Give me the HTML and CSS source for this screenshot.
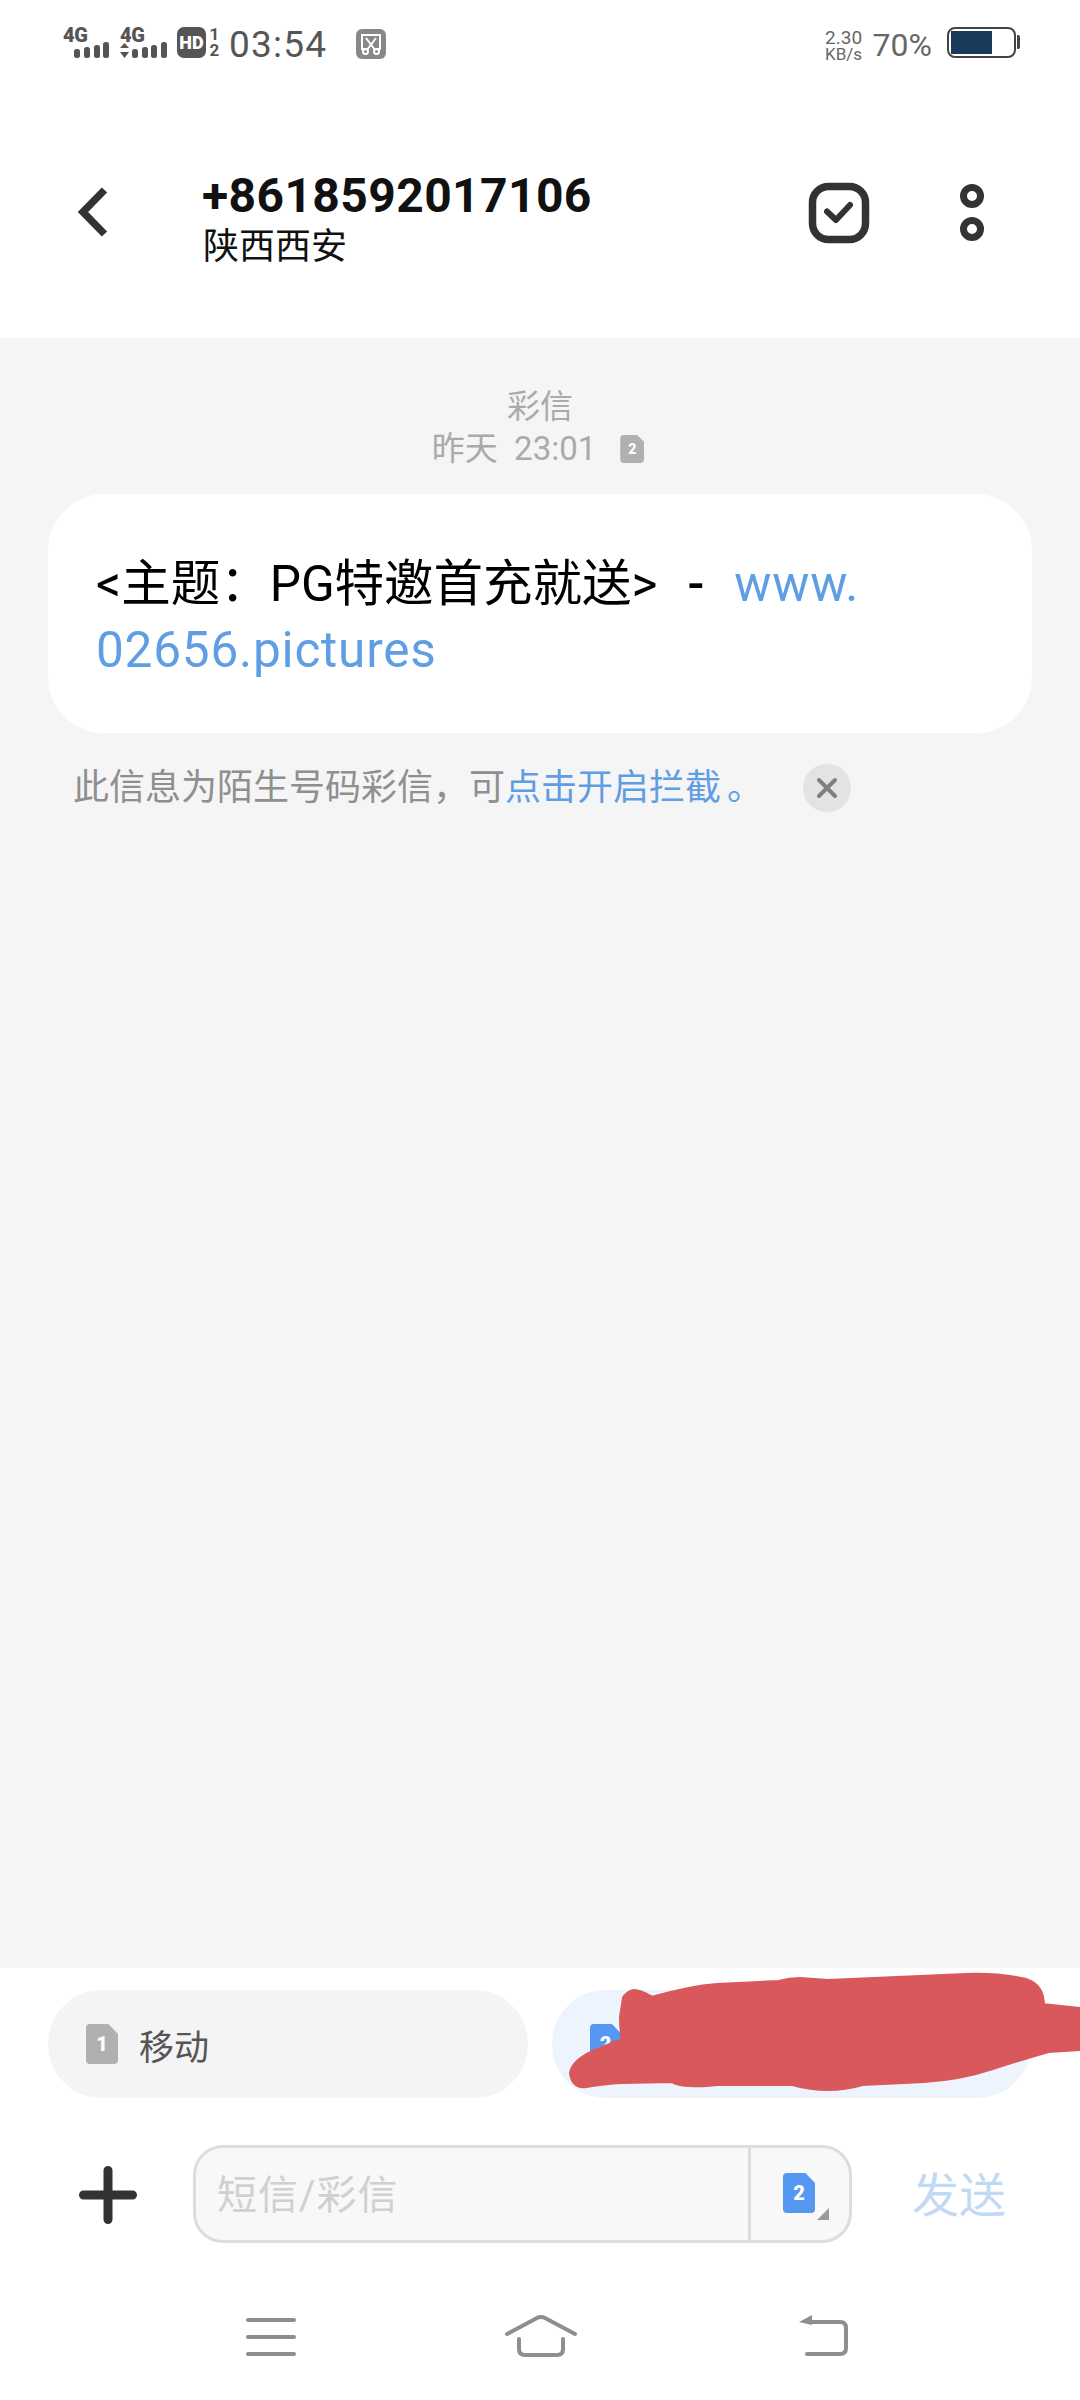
FILE: index.html
```html
<!DOCTYPE html>
<html lang="zh-CN">
<head>
  <meta charset="UTF-8" />
  <meta name="viewport" content="width=device-width, initial-scale=1.0"/>
  <title>+8618592017106</title>
  <link rel="stylesheet" href="styles.css">
</head>
<body>
  <div class="phone">

    <!-- Status bar -->
    <div class="status-bar">
      <div class="status-left">
        <div class="signal">
          <span class="net">4G</span>
          <svg class="bars" width="36" height="17" viewBox="0 0 36 17"><rect x="0" y="7" width="6" height="9" rx="2.5"/><rect x="10" y="5" width="6" height="11" rx="2.5"/><rect x="20" y="3" width="6" height="13" rx="2.5"/><rect x="29" y="0" width="6" height="16" rx="2.5"/></svg>
        </div>
        <div class="signal signal-two">
          <span class="net">4G</span>
          <svg class="bars" width="47" height="17" viewBox="0 0 47 17"><path d="M0 6 4.500 1 9 6zM0 10h9l-4.500 6z"/><rect x="12" y="7" width="6" height="9" rx="2.500"/><rect x="22" y="5" width="6" height="11" rx="2.500"/><rect x="31" y="3" width="6" height="13" rx="2.500"/><rect x="41" y="0" width="6" height="16" rx="2.500"/></svg>
        </div>
        <span class="hd">HD</span>
        <div class="hd-nums"><span>1</span><span>2</span></div>
        <span class="clock">03:54</span>
        <div class="clip-icon">
          <svg width="30" height="30" viewBox="0 0 30 30" fill="none" stroke="#fff" stroke-width="2"><path d="M9 20H6V6h18v14h-3"/><path d="M10 9l9 12M20 9l-9 12"/><circle cx="9.500" cy="22.500" r="2.500"/><circle cx="20.500" cy="22.500" r="2.500"/></svg>
        </div>
      </div>
      <div class="status-right">
        <div class="speed"><span class="speed-num">2.30</span><span class="speed-unit">KB/s</span></div>
        <span class="percent">70%</span>
        <div class="battery"><div class="battery-level"></div></div>
        <div class="battery-nub"></div>
      </div>
    </div>

    <!-- Header -->
    <header class="topbar">
      <svg class="back" width="30" height="50" viewBox="0 0 30 50" fill="none" stroke="#333" stroke-width="7.500"><path d="M26.500 3 5 25l21.500 22"/></svg>
      <div class="contact">
        <div class="number">+8618592017106</div>
        <div class="place">陕西西安</div>
      </div>
      <svg class="check-btn" width="62" height="62" viewBox="0 0 62 62" fill="none" stroke="#333"><rect x="4.500" y="4.500" width="53" height="53" rx="16" stroke-width="7.500"/><path d="M19 29.500l9 8.500 14-15" stroke-width="6" stroke-linecap="round" stroke-linejoin="round"/></svg>
      <svg class="more-btn" width="26" height="60" viewBox="0 0 26 60" fill="none" stroke="#333" stroke-width="7"><circle cx="13" cy="13" r="8.500"/><circle cx="13" cy="46" r="8.500"/></svg>
    </header>

    <!-- Thread -->
    <main class="thread">
      <div class="msg-type">彩信</div>
      <div class="msg-time">
        <span>昨天&nbsp;&nbsp;23:01</span>
        <span class="sim sim-small">2</span>
      </div>
      <div class="bubble">&lt;主题：PG特邀首充就送&gt;<span class="dash">-</span><span class="link">www.<br>02656.pictures</span></div>
      <div class="notice">
        <p>此信息为陌生号码彩信，可<span class="link-plain">点击开启拦截</span><span class="notice-end">。</span></p>
        <svg class="notice-close" width="48" height="48" viewBox="0 0 48 48"><circle cx="24" cy="24" r="24" fill="#e3e3e3"/><path d="M16 16l16 16M32 16 16 32" stroke="#7f7f7f" stroke-width="4" stroke-linecap="round"/></svg>
      </div>
    </main>

    <!-- SIM picker -->
    <div class="sim-row">
      <div class="sim-pill">
        <span class="sim sim-grey">1</span>
        <span class="sim-name">移动</span>
      </div>
      <div class="sim-pill sim-pill-blue">
        <span class="sim sim-blue">2</span>
      </div>
      <svg class="scribble" width="1080" height="130" viewBox="0 1970 1080 130"><path fill="#d9585c" stroke="#d9585c" stroke-width="6" stroke-linejoin="round" d="M572 2073Q574 2062 593 2053L624 2040Q622 2030 622 2017L625 1998Q630 1992 634 1992Q640 1992 652 1999Q690 1988 717 1986L779 1983Q790 1980 800 1980L828 1982L966 1976Q1000 1975 1026 1981Q1042 1986 1042 2006L1080 2010V2048L1048 2050Q1020 2058 993 2067Q960 2078 924 2080L862 2083Q845 2088 828 2088Q810 2088 793 2083L717 2083Q700 2085 690 2084Q680 2084 672 2080L621 2081Q605 2082 586 2085Q574 2087 572 2073z"/></svg>
    </div>

    <!-- Composer -->
    <div class="composer">
      <svg class="plus" width="58" height="58" viewBox="0 0 58 58" stroke="#333" stroke-width="9" stroke-linecap="round"><path d="M29 4.500v49M4.500 29h49"/></svg>
      <div class="input-box">
        <div class="input-text">短信/彩信</div>
        <div class="input-sim">
          <span class="sim sim-blue">2</span>
          <span class="corner"></span>
        </div>
      </div>
      <div class="send">发送</div>
    </div>

    <!-- Nav bar -->
    <nav class="navbar">
      <svg width="52" height="40" viewBox="0 0 52 40" stroke="#8e8e8e" stroke-width="4" stroke-linecap="round"><path d="M3 3h46M3 20h46M3 37h46"/></svg>
      <svg class="nav-home" width="74" height="48" viewBox="0 0 74 48" fill="none" stroke="#8e8e8e" stroke-width="4" stroke-linecap="round" stroke-linejoin="round"><path d="M3 19 33 3q4-2 8 0l30 16"/><path d="M15 24v10q0 6 6 6h32q6 0 6-6V24"/></svg>
      <svg class="nav-back" width="52" height="44" viewBox="0 0 52 44" fill="none" stroke="#8e8e8e" stroke-width="4" stroke-linecap="round"><path d="M14 9h29q6 0 6 6v20q0 6-6 6H10"/><path d="M2 9l13-7v10z" fill="#8e8e8e" stroke="none"/></svg>
    </nav>

  </div>
</body>
</html>
```

FILE: styles.css
```css
* {
  margin: 0;
  padding: 0;
  box-sizing: border-box;
}

body {
  background-color: #fff;
  font-family: Roboto, "Noto Sans CJK SC", sans-serif;
}

.phone {
  width: 1080px;
  height: 2400px;
  display: flex;
  flex-direction: column;
  overflow: hidden;
}

/* status bar */
.status-bar {
  height: 88px;
  flex-shrink: 0;
  padding: 27px 60px 0 63px;
  display: flex;
  justify-content: space-between;
  align-items: flex-start;
  color: #555;
}

.status-left,
.status-right {
  display: flex;
  align-items: flex-start;
}

.signal {
  position: relative;
  width: 47px;
  height: 32px;
}

.signal-two {
  margin-left: 10px;
}

.net {
  display: block;
  font-size: 20px;
  line-height: 17px;
  font-weight: 900;
  letter-spacing: -0.3px;
}

.bars {
  position: absolute;
  right: 0;
  top: 15px;
  fill: #555;
}

.hd {
  margin-left: 10px;
  width: 29px;
  height: 31px;
  background-color: #555;
  border-radius: 7px;
  color: #fff;
  font-size: 18px;
  font-weight: 900;
  line-height: 31px;
  text-align: center;
}

.hd-nums {
  margin-left: 3px;
  width: 11px;
  height: 31px;
  display: flex;
  flex-direction: column;
  font-size: 17px;
  font-weight: 700;
  line-height: 15.500px;
  text-align: center;
}

.clock {
  margin-left: 9px;
  font-size: 37px;
  line-height: 36px;
  letter-spacing: 1.200px;
}

.clip-icon {
  margin-left: 29px;
  margin-top: 2px;
  width: 30px;
  height: 30px;
  background-color: #888;
  border-radius: 6px;
}

.speed {
  width: 38px;
  margin-top: 2px;
  display: flex;
  flex-direction: column;
  align-items: center;
  color: #666;
}

.speed-num {
  font-size: 19px;
  line-height: 17px;
}

.speed-unit {
  font-size: 17px;
  line-height: 16px;
}

.percent {
  margin-left: 10px;
  margin-top: 1px;
  font-size: 32px;
  line-height: 34px;
  color: #666;
}

.battery {
  margin-left: 15px;
  width: 69px;
  height: 31px;
  border: 2px solid #444;
  border-radius: 8px;
  padding: 2px;
}

.battery-level {
  width: 41px;
  height: 100%;
  background-color: #1a3a5c;
}

.battery-nub {
  margin-top: 8px;
  margin-left: 1px;
  width: 3px;
  height: 14px;
  background-color: #444;
  border-radius: 0 2px 2px 0;
}

/* header */
.topbar {
  height: 250px;
  flex-shrink: 0;
  display: flex;
  align-items: flex-start;
}

.back {
  margin: 99px 0 0 78px;
}

.contact {
  margin: 80px 0 0 94px;
  flex: 1;
}

.number {
  font-size: 48px;
  line-height: 56px;
  font-weight: 700;
  color: #111;
  letter-spacing: 0.4px;
}

.place {
  padding-left: 1px;
  font-size: 36px;
  line-height: 46px;
  color: #111;
}

.check-btn {
  margin: 94px 0 0 0;
}

.more-btn {
  margin: 95px 95px 0 89px;
}

/* thread */
.thread {
  flex: 1;
  background-color: #f5f5f5;
  padding: 49px 48px 0;
}

.msg-type {
  text-align: center;
  font-size: 33px;
  line-height: 40px;
  color: #aaa;
}

.msg-time {
  display: flex;
  justify-content: center;
  align-items: center;
  gap: 24px;
  margin-top: 1px;
  padding-right: 4px;
  font-size: 33px;
  line-height: 42px;
  color: #aaa;
}

.bubble {
  margin-top: 24px;
  height: 239px;
  padding: 57px 48px 0;
  background-color: #fff;
  border-radius: 56px;
  font-size: 49.500px;
  line-height: 66px;
  color: #000;
}

.dash {
  margin: 0 30px;
  font-weight: 500;
}

.link {
  color: #5f9ee3;
  letter-spacing: 0.800px;
}

.link-plain {
  color: #5f9ee3;
}

.notice {
  margin-top: 31px;
  padding-left: 25px;
  display: flex;
  align-items: center;
  gap: 40px;
  font-size: 36px;
  line-height: 48px;
  color: #8f8f8f;
}

.notice-end {
  margin-left: 6px;
  color: #5f9ee3;
}

/* sim tag */
.sim {
  width: 32px;
  height: 40px;
  display: inline-block;
  color: #fff;
  font-size: 20px;
  font-weight: 900;
  line-height: 40px;
  text-align: center;
  border-radius: 4px;
  clip-path: polygon(0 0, 70% 0, 100% 25%, 100% 100%, 0 100%);
}

.sim-small {
  width: 24px;
  height: 28px;
  font-size: 14px;
  line-height: 28px;
  background-color: #b0b0b0;
}

.sim-grey {
  background-color: #b0b0b0;
}

.sim-blue {
  background-color: #5598f2;
}

/* sim picker */
.sim-row {
  height: 130px;
  flex-shrink: 0;
  padding: 22px 49px 0 48px;
  display: flex;
  gap: 24px;
  position: relative;
}

.sim-pill {
  flex: 1;
  height: 108px;
  padding-left: 38px;
  border-radius: 54px;
  background-color: #f4f4f4;
  display: flex;
  align-items: center;
  gap: 21px;
}

.sim-pill-blue {
  background-color: #edf4fd;
}

.sim-name {
  font-size: 35px;
  color: #555;
}

.scribble {
  position: absolute;
  left: 0;
  top: 2px;
}

/* composer */
.composer {
  height: 175px;
  flex-shrink: 0;
  padding-top: 47px;
  display: flex;
  align-items: flex-start;
}

.plus {
  margin: 21px 0 0 79px;
}

.input-box {
  margin-left: 56px;
  width: 659px;
  height: 98px;
  border: 3px solid #ddd;
  border-radius: 30px;
  background-color: #f8f8f8;
  display: flex;
}

.input-text {
  flex: 1;
  padding-left: 21px;
  font-size: 40px;
  line-height: 96px;
  color: #d0d0d0;
  letter-spacing: 1px;
}

.input-sim {
  width: 101px;
  border-left: 3px solid #ddd;
  padding: 25px 0 0 32px;
  position: relative;
}

.corner {
  position: absolute;
  left: 66px;
  top: 60px;
  width: 12px;
  height: 12px;
  background-color: #999;
  clip-path: polygon(100% 0, 100% 100%, 0 100%);
}

.send {
  margin: 28px 0 0 60px;
  font-size: 47px;
  line-height: 46px;
  color: #c2d9f5;
}

/* nav bar */
.navbar {
  height: 127px;
  flex-shrink: 0;
  display: flex;
  align-items: flex-start;
  padding: 44px 0 0 245px;
}

.nav-home {
  margin: -2px 0 0 207px;
}

.nav-back {
  margin: -4px 0 0 219px;
}
```
